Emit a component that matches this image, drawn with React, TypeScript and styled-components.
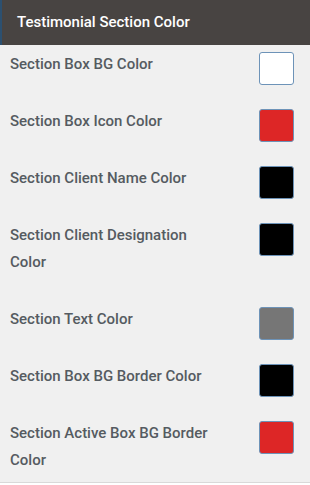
import styled, { createGlobalStyle } from 'styled-components';

const GlobalStyle = createGlobalStyle`
  html, body {
    margin: 0;
    padding: 0;
    background: #ffffff;
  }
  body {
    font-family: Roboto, "Liberation Sans", Arial, sans-serif;
  }
`;

const Panel = styled.section`
  width: 310px;
  height: 483px;
  box-sizing: border-box;
  background: #f0f0f0;
  border-bottom: 1px solid #d9d9d9;
  overflow: hidden;
`;

const Header = styled.h2`
  margin: 0;
  height: 45px;
  box-sizing: border-box;
  padding: 0 16px 2px 15px;
  display: flex;
  align-items: center;
  background: #484442;
  border-left: 2px solid #2c5070;
  color: #ffffff;
  font-size: 15px;
  font-weight: 500;
`;

const List = styled.div`
  display: flex;
  flex-direction: column;
  padding: 6px 16px 0 10px;
`;

const Row = styled.div`
  display: flex;
  align-items: flex-start;
  justify-content: space-between;
  gap: 20px;
  margin-bottom: 23px;
`;

const Label = styled.span`
  max-width: 200px;
  padding-bottom: 7px;
  color: #555b61;
  font-size: 15px;
  font-weight: 500;
  line-height: 27px;
`;

const Swatch = styled.span<{ $color: string }>`
  flex: none;
  width: 35px;
  height: 33px;
  margin-top: 1px;
  box-sizing: border-box;
  border: 1px solid #6d93b8;
  border-radius: 3px;
  background: ${({ $color }) => $color};
`;

const settings = [
  { label: 'Section Box BG Color', color: '#ffffff' },
  { label: 'Section Box Icon Color', color: '#dd2626' },
  { label: 'Section Client Name Color', color: '#000000' },
  { label: 'Section Client Designation Color', color: '#000000' },
  { label: 'Section Text Color', color: '#767676' },
  { label: 'Section Box BG Border Color', color: '#000000' },
  { label: 'Section Active Box BG Border Color', color: '#dd2626' },
];

export default function App() {
  return (
    <>
      <GlobalStyle />
      <Panel>
        <Header>Testimonial Section Color</Header>
        <List>
          {settings.map((item) => (
            <Row key={item.label}>
              <Label>{item.label}</Label>
              <Swatch $color={item.color} />
            </Row>
          ))}
        </List>
      </Panel>
    </>
  );
}
